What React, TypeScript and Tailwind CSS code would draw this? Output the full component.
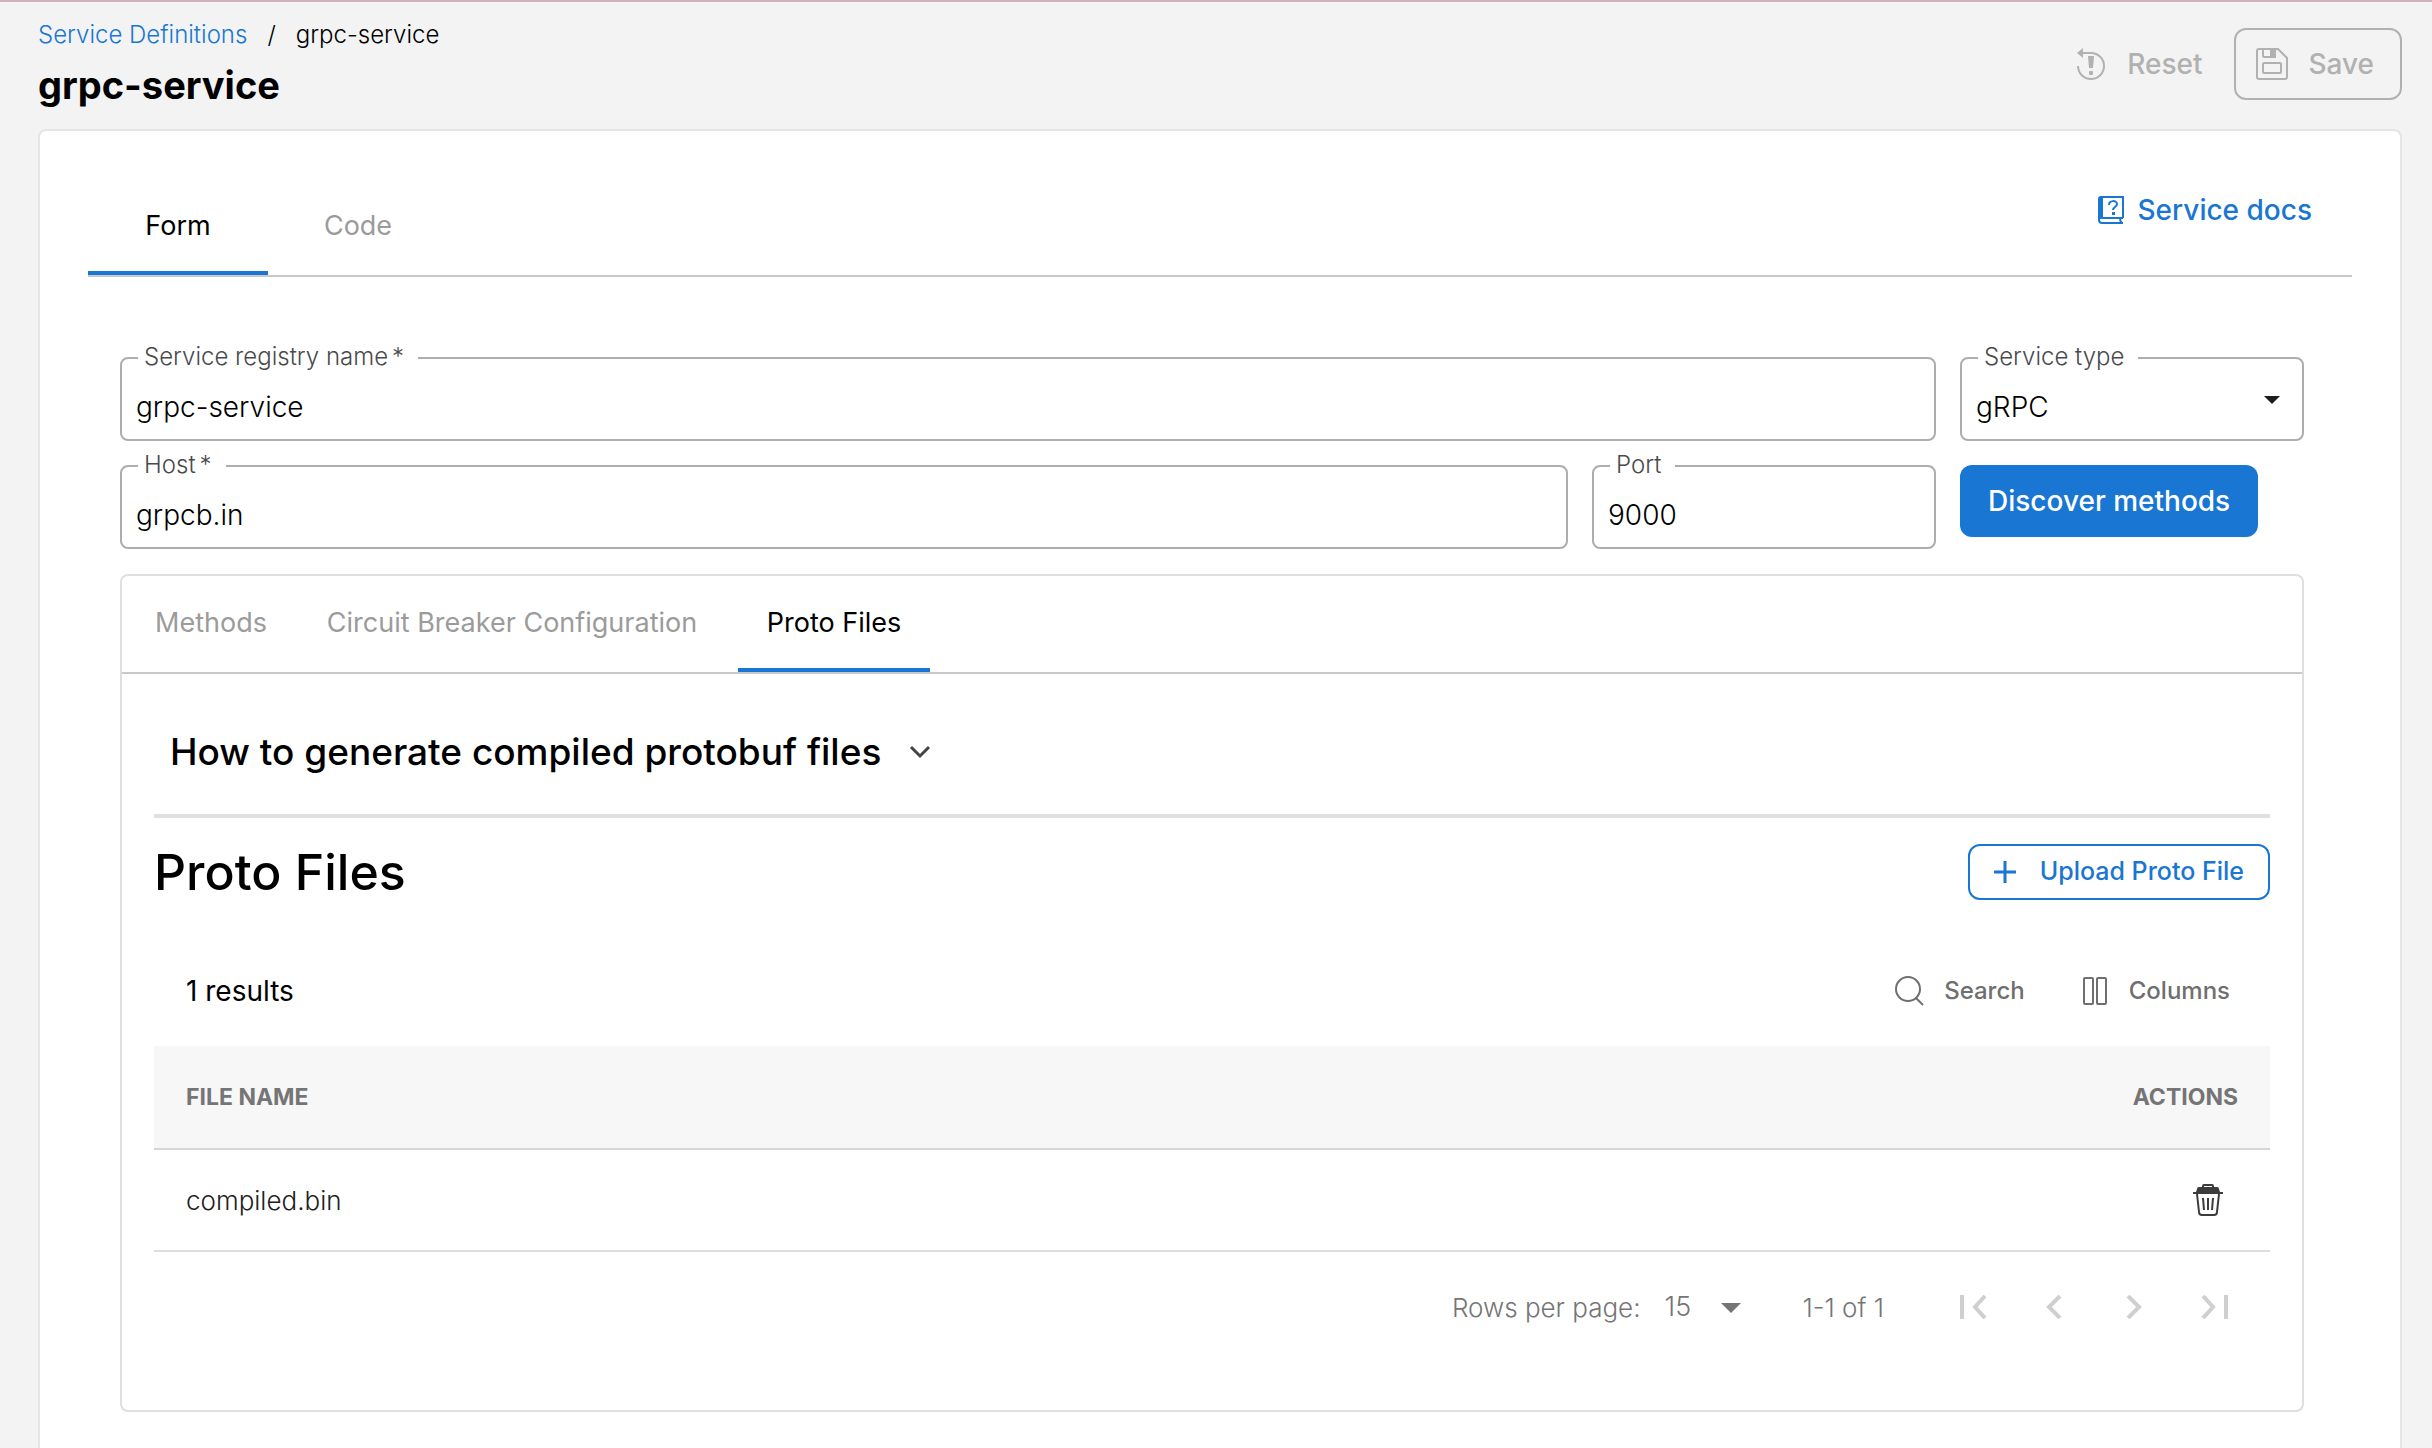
import { useId, useState } from 'react';
import type React from 'react';

type TabItem = { label: string; className: string };

const mainTabs: TabItem[] = [
  { label: 'Form', className: 'w-[180px]' },
  { label: 'Code', className: 'w-[180px]' },
];

const serviceTabs: TabItem[] = [
  { label: 'Methods', className: 'w-[150px]' },
  { label: 'Circuit Breaker Configuration', className: 'w-[452px]' },
  { label: 'Proto Files', className: 'w-[192px]' },
];

const protoFiles = [{ name: 'compiled.bin' }];

function ResetIcon() {
  return (
    <svg width="32" height="32" viewBox="0 0 32 32" fill="none" aria-hidden="true">
      <path d="M5 5h11a13 13 0 1 1-13 13" stroke="currentColor" strokeWidth="2" />
      <path d="M2 5l6-5v10z" fill="currentColor" />
      <path d="M13 8h6l-1 12h-4z" fill="currentColor" />
      <rect x="14" y="23" width="4" height="4" rx="1" fill="currentColor" />
    </svg>
  );
}

function SaveIcon() {
  return (
    <svg width="32" height="32" viewBox="0 0 32 32" fill="none" stroke="currentColor" strokeWidth="2" aria-hidden="true">
      <path d="M3 1h19l9 9v19a2 2 0 0 1-2 2H3a2 2 0 0 1-2-2V3a2 2 0 0 1 2-2z" />
      <path d="M7 1v7a1 1 0 0 0 1 1h11V1" />
      <rect x="14" y="2" width="5" height="7" fill="currentColor" stroke="none" />
      <rect x="7" y="15" width="18" height="10" rx="1" />
    </svg>
  );
}

function DocsIcon() {
  return (
    <svg width="26" height="28" viewBox="0 0 26 28" fill="none" stroke="currentColor" aria-hidden="true">
      <path d="M25 22V1H3a2 2 0 0 0-2 2v21a3 3 0 0 0 3 3h21" strokeWidth="2" />
      <path d="M25 22H4a2 2 0 0 0-3 2" strokeWidth="2" />
      <path d="M23 22q-2 2 1 5" strokeWidth="2" />
      <rect x="1" y="2" width="4" height="20" fill="currentColor" stroke="none" />
      <path d="M11 9c0-5 8-5 8-1 0 3-4 3-4 6" strokeWidth="2" />
      <rect x="14" y="16" width="3" height="3" fill="currentColor" stroke="none" />
    </svg>
  );
}

function SearchIcon() {
  return (
    <svg width="32" height="32" viewBox="0 0 32 32" fill="none" stroke="currentColor" strokeWidth="2" aria-hidden="true">
      <circle cx="14" cy="14" r="12" />
      <path d="M22 23l7 7" />
    </svg>
  );
}

function ColumnsIcon() {
  return (
    <svg width="24" height="28" viewBox="0 0 24 28" fill="none" stroke="currentColor" strokeWidth="2" aria-hidden="true">
      <rect x="1" y="1" width="9" height="26" rx="1" />
      <rect x="14" y="1" width="9" height="26" rx="1" />
    </svg>
  );
}

function TrashIcon() {
  return (
    <svg width="32" height="32" viewBox="0 0 32 32" fill="none" stroke="currentColor" aria-hidden="true">
      <path d="M11 4V2a1 1 0 0 1 1-1h8a1 1 0 0 1 1 1v2" strokeWidth="2" />
      <path d="M7 3h18a2 2 0 0 1 2 2l1 3h3v2H1V8h3l1-3a2 2 0 0 1 2-2z" fill="currentColor" stroke="none" />
      <path d="M5 10l2 18a3 3 0 0 0 3 3h12a3 3 0 0 0 3-3l2-18" strokeWidth="2" />
      <path d="M11 14l1 12M16 14v12M21 14l-1 12" strokeWidth="2" />
    </svg>
  );
}

function Tabs({ items, initial, className = '' }: { items: TabItem[]; initial: string; className?: string }) {
  const [active, setActive] = useState(initial);
  return (
    <div role="tablist" className={`flex ${className}`}>
      {items.map(item => (
        <button
          key={item.label}
          type="button"
          role="tab"
          aria-selected={active === item.label}
          onClick={() => setActive(item.label)}
          className={`h-24 shrink-0 border-b-4 pt-[2px] text-[27px] whitespace-nowrap ${item.className} ${
            active === item.label ? 'border-[#1976d2] text-black' : 'border-transparent text-[#9b9b9b]'
          }`}
        >
          {item.label}
        </button>
      ))}
    </div>
  );
}

function Field({
  label,
  required = false,
  className = '',
  children,
}: {
  label: string;
  required?: boolean;
  className?: string;
  children: (id: string) => React.ReactNode;
}) {
  const id = useId();
  return (
    <div className={`relative h-[84px] rounded-lg border-2 border-[#adadad] ${className}`}>
      {children(id)}
      <label
        htmlFor={id}
        className="absolute -top-5 left-4 bg-white pr-[14px] pl-[6px] text-2xl leading-9 font-light text-[#4a4a4a]"
      >
        {label}
        {required && <span className="ml-1">*</span>}
      </label>
    </div>
  );
}

const inputClass = 'block h-full w-full bg-transparent px-[14px] pt-4 text-[28px] font-light text-black outline-none';

function Pagination() {
  const steps = [
    { label: 'First page', path: 'M4 0v24M27 1l-10 11 10 11' },
    { label: 'Previous page', path: 'M22 1l-11 11 11 11' },
    { label: 'Next page', path: 'M10 1l11 11-11 11' },
    { label: 'Last page', path: 'M5 1l10 11-10 11M28 0v24' },
  ];
  return (
    <div className="flex h-[110px] items-center justify-end pr-4 text-[26px] font-light text-[#757575]">
      <label htmlFor="rows-per-page">Rows per page:</label>
      <div className="relative ml-4">
        <select
          id="rows-per-page"
          defaultValue="15"
          className="h-12 w-24 appearance-none bg-transparent pl-2 text-[27px] text-[#757575] outline-none"
        >
          <option>15</option>
          <option>25</option>
          <option>50</option>
        </select>
        <svg width="20" height="10" className="pointer-events-none absolute top-5 right-3" aria-hidden="true">
          <path d="M0 0h20L10 10z" fill="currentColor" />
        </svg>
      </div>
      <span className="ml-[50px]">1-1 of 1</span>
      <div className="ml-[50px] flex text-[#cfcfcf]">
        {steps.map(step => (
          <button key={step.label} type="button" disabled aria-label={step.label} className="flex h-12 w-20 items-center justify-center">
            <svg width="32" height="24" viewBox="0 0 32 24" fill="none" stroke="currentColor" strokeWidth="4" aria-hidden="true">
              <path d={step.path} />
            </svg>
          </button>
        ))}
      </div>
    </div>
  );
}

function ProtoFilesPanel() {
  return (
    <div className="px-8 pt-4 pb-12">
      <button
        type="button"
        aria-expanded="false"
        className="flex h-32 w-full items-center gap-7 border-b-4 border-[#e0e0e0] pl-4 text-[37px] font-medium text-black"
      >
        How to generate compiled protobuf files
        <svg width="22" height="14" viewBox="0 0 22 14" fill="none" stroke="#444" strokeWidth="3" aria-hidden="true">
          <path d="M2 2l9 9 9-9" />
        </svg>
      </button>

      <div className="mt-[26px] flex h-14 items-center justify-between">
        <h2 className="text-[50px] font-medium text-black">Proto Files</h2>
        <button
          type="button"
          className="flex h-14 items-center gap-6 rounded-xl border-2 border-[#1976d2] pr-6 pl-6 text-[25px] font-medium text-[#1976d2]"
        >
          <svg width="22" height="22" viewBox="0 0 22 22" fill="none" stroke="currentColor" strokeWidth="3" aria-hidden="true">
            <path d="M11 0v22M0 11h22" />
          </svg>
          Upload Proto File
        </button>
      </div>

      <div className="mt-[35px] flex h-[111px] items-center justify-between px-8">
        <span className="text-[28px] text-black">1 results</span>
        <div className="flex gap-[58px] pr-2 text-2xl font-medium text-[#6f6f6f]">
          <button type="button" className="flex items-center gap-[18px]">
            <SearchIcon />
            Search
          </button>
          <button type="button" className="flex items-center gap-[22px]">
            <ColumnsIcon />
            Columns
          </button>
        </div>
      </div>

      <table className="w-full border-collapse">
        <thead>
          <tr className="h-[103px] border-b-2 border-[#d6d6d6] bg-[#f7f7f7] text-[23px] text-[#757575] uppercase">
            <th className="pl-8 text-left font-bold">File name</th>
            <th className="pr-8 text-right font-bold">Actions</th>
          </tr>
        </thead>
        <tbody>
          {protoFiles.map(file => (
            <tr key={file.name} className="h-[102px] border-b-2 border-[#dedede]">
              <td className="pl-8 text-[26px] font-light text-[#212121]">{file.name}</td>
              <td className="pr-[46px]">
                <button type="button" aria-label={`Delete ${file.name}`} className="ml-auto block text-[#3c3c3c]">
                  <TrashIcon />
                </button>
              </td>
            </tr>
          ))}
        </tbody>
      </table>

      <Pagination />
    </div>
  );
}

export default function App() {
  return (
    <div className="flex min-h-screen flex-col border-t-2 border-[#cfb4bb] bg-[#f3f3f3] pr-[30px] pl-[38px] font-['Inter','Liberation_Sans',sans-serif] text-black">
      <header className="flex items-start justify-between pt-[17px] pb-4">
        <div>
          <nav aria-label="Breadcrumb" className="flex gap-5 text-2xl font-light">
            <a href="#" className="text-[#1976d2]">
              Service Definitions
            </a>
            <span>/</span>
            <span>grpc-service</span>
          </nav>
          <h1 className="mt-[6px] text-[38px] leading-[56px] font-bold">grpc-service</h1>
        </div>
        <div className="mt-[9px] flex text-[28px] font-medium text-[#b1b1b1]">
          <button type="button" disabled className="flex h-[72px] items-center gap-5 px-8">
            <ResetIcon />
            Reset
          </button>
          <button type="button" disabled className="flex h-[72px] items-center gap-5 rounded-xl border-2 border-[#b1b1b1] pr-[26px] pl-5">
            <SaveIcon />
            Save
          </button>
        </div>
      </header>

      <main className="flex-1 rounded-t-lg border-2 border-b-0 border-[#e5e5e5] bg-white px-12 pt-12 pb-9">
        <div className="flex items-start justify-between border-b-2 border-[#c9c9c9]">
          <Tabs items={mainTabs} initial="Form" />
          <a href="#" className="mt-[10px] mr-10 flex items-center gap-[14px] text-[28px] font-medium text-[#1976d2]">
            <DocsIcon />
            Service docs
          </a>
        </div>

        <div className="mt-20 mr-12 ml-8">
          <form className="grid grid-cols-6 gap-6">
            <Field label="Service registry name" required className="col-span-5">
              {id => <input id={id} required defaultValue="grpc-service" className={inputClass} />}
            </Field>
            <Field label="Service type">
              {id => (
                <>
                  <select id={id} defaultValue="gRPC" className={`${inputClass} appearance-none`}>
                    <option>gRPC</option>
                    <option>REST</option>
                  </select>
                  <svg width="16" height="8" className="pointer-events-none absolute top-[37px] right-[22px]" aria-hidden="true">
                    <path d="M0 0h16L8 8z" fill="#1d1d1d" />
                  </svg>
                </>
              )}
            </Field>
            <Field label="Host" required className="col-span-4">
              {id => <input id={id} required defaultValue="grpcb.in" className={inputClass} />}
            </Field>
            <Field label="Port">{id => <input id={id} defaultValue="9000" className={inputClass} />}</Field>
            <button
              type="button"
              className="h-[72px] justify-self-start rounded-xl bg-[#1976d2] px-7 text-[28px] font-medium whitespace-nowrap text-white"
            >
              Discover methods
            </button>
          </form>

          <section className="mt-[25px] rounded-lg border-2 border-[#dfdfdf]">
            <div className="border-b-2 border-[#c9c9c9]">
              <Tabs items={serviceTabs} initial="Proto Files" className="pl-[14px]" />
            </div>
            <ProtoFilesPanel />
          </section>
        </div>
      </main>
    </div>
  );
}
